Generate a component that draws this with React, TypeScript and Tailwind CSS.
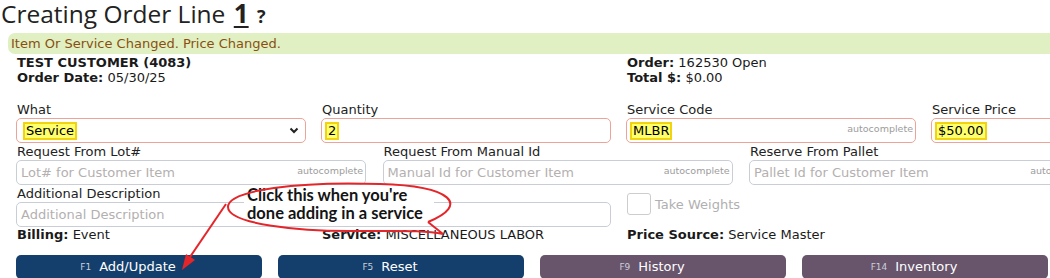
import clsx from 'clsx'
import type { ReactNode } from 'react'

type FieldProps = {
  tone?: 'red' | 'gray'
  auto?: boolean
  placeholder?: string
  select?: boolean
  className?: string
  children?: ReactNode
}

// yellow highlight that the app puts on changed values
const Hl = ({ children }: { children: ReactNode }) => (
  <span className="inline-block border-2 border-[#f2d30f] bg-[#ffff6e] px-[1px] leading-[14px] text-black">
    {children}
  </span>
)

const Field: React.FC<FieldProps> = ({ tone = 'gray', auto, placeholder, select, className, children }) => (
  <div
    className={clsx(
      'flex h-[25px] items-center rounded-[5px] border bg-white pr-[2px] text-[13px]',
      tone === 'red' ? 'border-[#eba497]' : 'border-[#c9ced6]',
      select ? 'pl-[6px]' : 'pl-[3px]',
      className
    )}
  >
    <div className="flex-1 truncate">
      {children ?? <span className="pl-[1px] text-[#b4b0b0]">{placeholder}</span>}
    </div>
    {auto && <span className="pb-[2px] text-[9.5px] text-[#9c9c9c]">autocomplete</span>}
    {select && (
      <svg width="10" height="7" viewBox="0 0 10 7" className="mr-[4px]">
        <path d="M1.5 1.5 5 5 8.5 1.5" fill="none" stroke="#222" strokeWidth="2" />
      </svg>
    )}
  </div>
)

const Label = ({ children }: { children: ReactNode }) => (
  <div className="pl-[1px] text-[13px] leading-[17px] text-[#222]">{children}</div>
)

const buttons = [
  { key: 'F1', label: 'Add/Update', tone: 'blue' },
  { key: 'F5', label: 'Reset', tone: 'blue' },
  { key: 'F9', label: 'History', tone: 'purple' },
  { key: 'F14', label: 'Inventory', tone: 'purple' },
]

export default function App() {
  return (
    <div className="relative h-[278px] w-[1050px] overflow-hidden bg-white font-['DejaVu_Sans',sans-serif] text-[13px] text-[#1a1a1a]">
      <div className="w-[1240px]">
        <h1 className="-mt-[2px] h-[30px] pl-[1px] font-['Open_Sans',sans-serif] text-[24.5px] leading-[30px] text-[#222]">
          Creating Order Line{' '}
          <span className="ml-[2px] text-[26px] font-bold underline decoration-2 underline-offset-[3px]">1</span>{' '}
          <span className="ml-[2px] text-[18px] font-bold">?</span>
        </h1>

        <div className="ml-[8px] mt-[5px] h-[21px] rounded-l-[7px] bg-[#e0f0c2] pl-[3px] leading-[21px] text-[#8a4f10]">
          Item Or Service Changed. Price Changed.
        </div>

        <div className="mt-[1px] grid grid-cols-[repeat(4,290px)] gap-x-[15px] pl-[17px] leading-[15px]">
          <div className="col-span-2">
            <div className="font-bold">TEST CUSTOMER (4083)</div>
            <div>
              <b>Order Date:</b> 05/30/25
            </div>
          </div>
          <div className="col-span-2">
            <div>
              <b>Order:</b> 162530 Open
            </div>
            <div>
              <b>Total $:</b> $0.00
            </div>
          </div>
        </div>

        <div className="mt-[16px] pl-[16px]">
          <div className="grid grid-cols-[repeat(4,290px)] gap-x-[15px]">
            <div>
              <Label>What</Label>
              <Field tone="red" select>
                <Hl>Service</Hl>
              </Field>
            </div>
            <div>
              <Label>Quantity</Label>
              <Field tone="red">
                <Hl>2</Hl>
              </Field>
            </div>
            <div>
              <Label>Service Code</Label>
              <Field tone="red" auto>
                <Hl>MLBR</Hl>
              </Field>
            </div>
            <div>
              <Label>Service Price</Label>
              <Field tone="red">
                <Hl>$50.00</Hl>
              </Field>
            </div>
          </div>

          <div className="grid grid-cols-[repeat(3,350px)] gap-x-[16.5px]">
            <div>
              <Label>Request From Lot#</Label>
              <Field auto placeholder="Lot# for Customer Item" />
            </div>
            <div>
              <Label>Request From Manual Id</Label>
              <Field auto placeholder="Manual Id for Customer Item" />
            </div>
            <div>
              <Label>Reserve From Pallet</Label>
              <Field auto placeholder="Pallet Id for Customer Item" />
            </div>
          </div>

          <div className="grid grid-cols-[repeat(4,290px)] gap-x-[15px]">
            <div className="col-span-2 w-[595px]">
              <Label>Additional Description</Label>
              <Field placeholder="Additional Description" />
            </div>
            <div className="flex items-center gap-[4px] self-start pl-[1px] pt-[8px]">
              <div className="h-[22px] w-[24px] rounded-[3px] border border-[#cdcdcd] bg-white" />
              <span className="pt-[2px] text-[#b0b0b0]">Take Weights</span>
            </div>
          </div>

          <div className="grid grid-cols-[repeat(4,290px)] gap-x-[15px] pl-[1px] leading-[15px]">
            <div>
              <b>Billing:</b> Event
            </div>
            <div>
              <b>Service:</b> MISCELLANEOUS LABOR
            </div>
            <div>
              <b>Price Source:</b> Service Master
            </div>
          </div>

          <div className="mt-[13px] flex gap-[16px]">
            {buttons.map((b) => (
              <div
                key={b.key}
                className={clsx(
                  'flex h-[24px] w-[246px] items-center justify-center rounded-[5px] pr-[22px] leading-[24px] text-white',
                  b.tone === 'blue' ? 'bg-[#143f6c]' : 'bg-[#68556c]'
                )}
              >
                <span className="mr-[8px] text-[9px] text-[#c9d0da]">{b.key}</span>
                <span>{b.label}</span>
              </div>
            ))}
          </div>
        </div>
      </div>

      {/* callout drawn on top of the form */}
      <div className="absolute left-[244px] top-[186px] w-[190px] bg-white font-['Lato',sans-serif] text-[16.5px] font-bold leading-[18px] text-[#141414]">
        <div className="pl-[3px]">Click this when you're</div>
        <div className="pl-[3px]">done adding in a service</div>
      </div>
      <svg className="pointer-events-none absolute left-0 top-0" width="1050" height="278" viewBox="0 0 1050 278">
        <g fill="none" stroke="#e4262a" strokeWidth="2">
          <path d="M428 222 C 470 205, 452 186, 380 184 C 300 181, 228 190, 228 207 C 228 224, 300 232, 360 231 C 400 231, 425 230, 443 234 L 428 222" />
          <path d="M226 204 L 190 257" />
        </g>
        <polygon points="182,270 195,260 186,254" fill="#e4262a" />
      </svg>
    </div>
  )
}
